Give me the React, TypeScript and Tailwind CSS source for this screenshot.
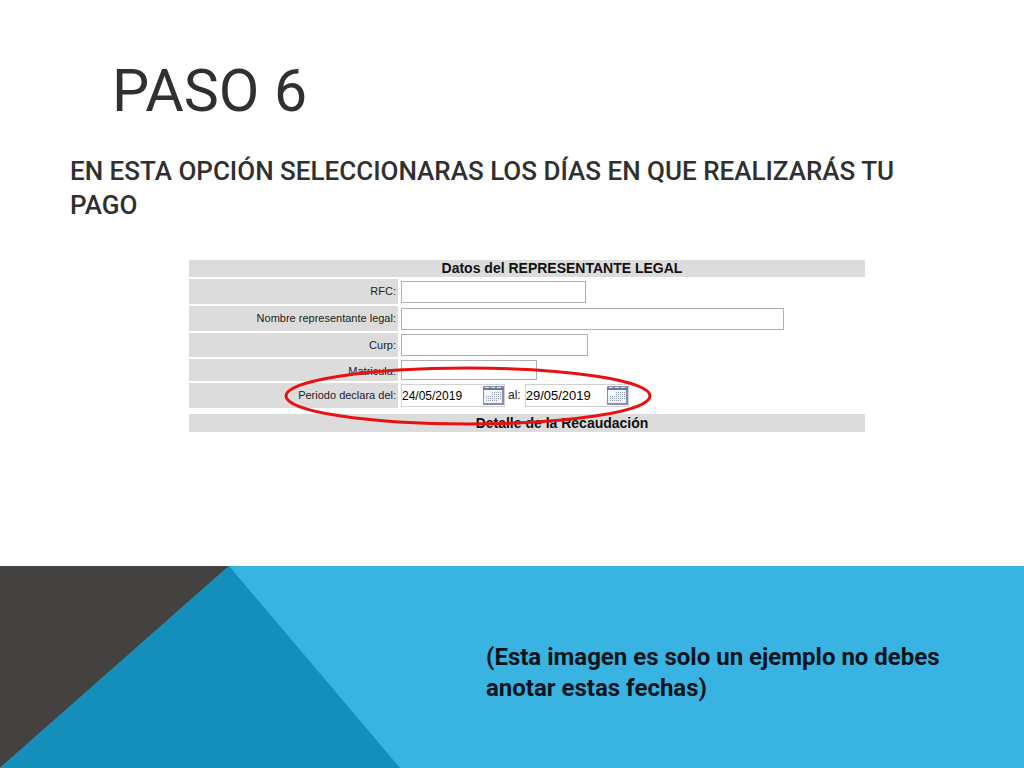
import { useState } from "react";

interface FieldProps {
  id: string;
  label: string;
  rowClass: string;
  inputClass: string;
}

function CalendarIcon() {
  return (
    <svg viewBox="0 0 21 19" className="h-[19px] w-[21px]" shapeRendering="crispEdges">
      <rect x="0" y="0" width="21" height="19" fill="#8490ab" />
      <rect x="1" y="4" width="18" height="13" fill="#f4f6fb" />
      <path d="M2 1.5h4M8 1.5h4M14 1.5h4" stroke="#dfe4f0" strokeWidth="1" />
      <rect x="0" y="2" width="21" height="2" fill="#6b7898" />
      <path d="M9 6.5h9M9 8.5h9M3 10.5h15M3 12.5h15M3 14.5h11" stroke="#8f9bbd" strokeWidth="1" strokeDasharray="1 1" />
    </svg>
  );
}

function Field({ id, label, rowClass, inputClass }: FieldProps) {
  const [value, setValue] = useState("");

  return (
    <div className={`flex gap-[3px] leading-6 ${rowClass}`}>
      <label htmlFor={id} className="w-[209px] shrink-0 bg-[#dcdcdc] pr-0.5 text-right text-[11px]">
        {label}
      </label>
      <input
        id={id}
        value={value}
        onChange={(e) => setValue(e.target.value)}
        className={`min-w-0 self-center border border-[#b0b0b0] bg-white px-0.5 outline-none ${inputClass}`}
      />
    </div>
  );
}

function DateBox({ id, initial, calendarLabel, className }: { id: string; initial: string; calendarLabel: string; className: string }) {
  const [date, setDate] = useState(initial);

  return (
    <div className={`flex h-[23px] w-[104px] items-center justify-between self-center border border-[#d0d0d0] bg-white ${className}`}>
      <input
        id={id}
        value={date}
        onChange={(e) => setDate(e.target.value)}
        className="w-[72px] bg-transparent text-black outline-none"
      />
      <button type="button" aria-label={calendarLabel} className="cursor-pointer">
        <CalendarIcon />
      </button>
    </div>
  );
}

function LegalForm() {
  return (
    <form className="relative flex flex-col font-['Liberation_Sans',sans-serif] text-xs text-[#222]">
      <h2 className="h-[17px] bg-[#dcdcdc] pl-[70px] text-center text-sm leading-4 font-bold text-[#111]">
        Datos del REPRESENTANTE LEGAL
      </h2>
      <div className="mt-0.5 flex flex-col gap-0.5">
        <Field id="rfc" label="RFC:" rowClass="h-[25px]" inputClass="h-[22px] w-[185px]" />
        <Field id="nombre" label="Nombre representante legal:" rowClass="h-[25px]" inputClass="h-[22px] w-[383px]" />
        <Field id="curp" label="Curp:" rowClass="h-6" inputClass="h-[22px] w-[187px]" />
        <Field id="matricula" label="Matricula:" rowClass="h-[22px]" inputClass="h-5 w-[136px]" />
        <div className="flex h-[25px] gap-[3px] leading-6">
          <label htmlFor="del" className="w-[209px] shrink-0 bg-[#dcdcdc] pr-0.5 text-right text-[11px]">
            Periodo declara del:
          </label>
          <DateBox id="del" initial="24/05/2019" calendarLabel="Elegir fecha inicial" className="text-xs" />
          <label htmlFor="al" className="pr-px">al:</label>
          <DateBox id="al" initial="29/05/2019" calendarLabel="Elegir fecha final" className="text-[13px]" />
        </div>
      </div>
      <h2 className="mt-1.5 h-[18px] bg-[#dcdcdc] pl-[70px] text-center text-sm leading-[18px] font-bold text-[#111]">
        Detalle de la Recaudación
      </h2>
      <svg viewBox="0 0 368 60" className="pointer-events-none absolute top-[106px] left-[95px] h-[60px] w-[368px]">
        <ellipse cx="184" cy="30" rx="182" ry="28" fill="none" stroke="#e81111" strokeWidth="3" />
      </svg>
    </form>
  );
}

export default function App() {
  return (
    <div className="flex min-h-screen flex-col bg-white font-[Roboto,sans-serif]">
      <main className="grow px-[70px] pt-[54px] text-[#303030]">
        <h1 className="pl-[42px] text-[59px] leading-[74px] font-normal">PASO 6</h1>
        <p className="mt-[26px] text-[26px] leading-[34px] font-medium">
          EN ESTA OPCIÓN SELECCIONARAS LOS DÍAS EN QUE REALIZARÁS TU PAGO
        </p>
        <div className="mt-[38px] mr-[89px] ml-[119px]">
          <LegalForm />
        </div>
      </main>
      <footer className="relative flex h-[202px] bg-[#39b3e1]">
        <svg viewBox="0 0 400 202" className="absolute top-0 left-0 h-full w-[400px]">
          <path d="M0 0H229L0 202Z" fill="#434240" />
          <path d="M229 0L400 202H0Z" fill="#148fbc" />
        </svg>
        <p className="ml-auto w-[538px] pt-[76px] pr-[60px] text-2xl leading-[31px] font-bold text-[#05141c]">
          (Esta imagen es solo un ejemplo no debes anotar estas fechas)
        </p>
      </footer>
    </div>
  );
}
